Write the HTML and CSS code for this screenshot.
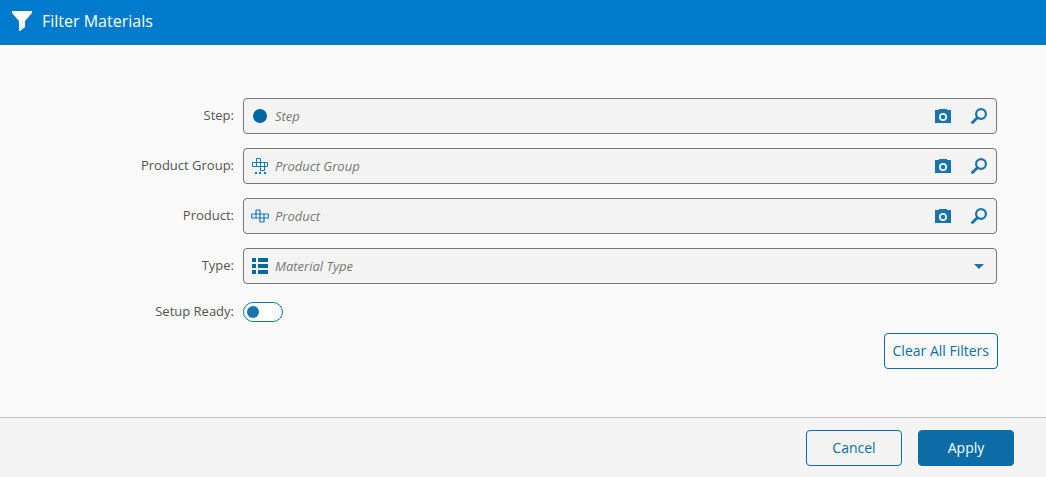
FILE: index.html
```
<!DOCTYPE html>
<html lang="en">
<head>
    <meta charset="UTF-8">
    <meta name="viewport" content="width=device-width, initial-scale=1.0">
    <title>Filter Materials</title>
    <link rel="stylesheet" href="styles.css">
</head>
<body>
    <svg class="sprite" aria-hidden="true">
        <symbol id="icon-camera" viewBox="0 0 16 14">
            <path fill-rule="evenodd" d="M0 1H4V0H12V1H16V14H0ZM8 4a4 4 0 1 0 0 8a4 4 0 1 0 0-8ZM8 5.700a2.300 2.300 0 1 1 0 4.600a2.300 2.300 0 1 1 0-4.600Z" fill="currentColor"/>
        </symbol>
        <symbol id="icon-search" viewBox="0 0 16 16">
            <circle cx="10" cy="6" r="4.900" fill="none" stroke="currentColor" stroke-width="2.200"/>
            <path d="M6.300 9.700L1.500 14.500" fill="none" stroke="currentColor" stroke-width="2.800" stroke-linecap="round"/>
        </symbol>
    </svg>
    <header class="dialog-header">
        <svg class="header-icon" viewBox="0 0 20 20" aria-hidden="true">
            <path d="M0 0H20V2L13 10V16L8 20H7V10L0 2Z" fill="currentColor"/>
        </svg>
        <h1 class="dialog-title">Filter Materials</h1>
    </header>
    <form class="dialog-form">
        <main class="dialog-body">
            <div class="form-row">
                <label class="form-label" for="step">Step:</label>
                <div class="field">
                    <svg class="field-icon" viewBox="0 0 18 18" aria-hidden="true"><circle cx="9" cy="9" r="7" fill="currentColor"/></svg>
                    <input class="field-input" id="step" type="text" placeholder="Step">
                    <button class="icon-btn" type="button" aria-label="Scan step"><svg class="camera" aria-hidden="true"><use href="#icon-camera"/></svg></button>
                    <button class="icon-btn" type="button" aria-label="Search step"><svg class="search" aria-hidden="true"><use href="#icon-search"/></svg></button>
                </div>
            </div>
            <div class="form-row">
                <label class="form-label" for="product-group">Product Group:</label>
                <div class="field">
                    <svg class="field-icon outline" viewBox="0 0 18 18" aria-hidden="true">
                        <path d="M1.500 5.500H16.500V9.500H1.500ZM5.500 9.500V1.500H9.500V13.500H13.500V5.500M9.500 9.500H13.500" fill="none" stroke="currentColor"/>
                        <path d="M4 15H6V17H4ZM8 15H10V17H8ZM13 15H15V17H13Z" fill="currentColor"/>
                    </svg>
                    <input class="field-input" id="product-group" type="text" placeholder="Product Group">
                    <button class="icon-btn" type="button" aria-label="Scan product group"><svg class="camera" aria-hidden="true"><use href="#icon-camera"/></svg></button>
                    <button class="icon-btn" type="button" aria-label="Search product group"><svg class="search" aria-hidden="true"><use href="#icon-search"/></svg></button>
                </div>
            </div>
            <div class="form-row">
                <label class="form-label" for="product">Product:</label>
                <div class="field">
                    <svg class="field-icon outline" viewBox="0 0 18 18" aria-hidden="true">
                        <path d="M.7 7H17.300V11H.7ZM5 11V3H9V15H13V7M9 11H13" fill="none" stroke="currentColor" stroke-width="1.200" stroke-linejoin="round"/>
                    </svg>
                    <input class="field-input" id="product" type="text" placeholder="Product">
                    <button class="icon-btn" type="button" aria-label="Scan product"><svg class="camera" aria-hidden="true"><use href="#icon-camera"/></svg></button>
                    <button class="icon-btn" type="button" aria-label="Search product"><svg class="search" aria-hidden="true"><use href="#icon-search"/></svg></button>
                </div>
            </div>
            <div class="form-row">
                <label class="form-label" for="type">Type:</label>
                <div class="field">
                    <svg class="field-icon" viewBox="0 0 18 18" aria-hidden="true">
                        <path d="M1 1H5V5H1ZM7 1H17V5H7ZM1 7H5V11H1ZM7 7H17V11H7ZM1 13H5V17H1ZM7 13H17V17H7Z" fill="currentColor"/>
                    </svg>
                    <select class="field-input" id="type">
                        <option value="">Material Type</option>
                    </select>
                    <svg class="caret" viewBox="0 0 10 5" aria-hidden="true"><path d="M0 0H10L5 5Z" fill="currentColor"/></svg>
                </div>
            </div>
            <div class="form-row toggle-row">
                <label class="form-label" for="setup-ready">Setup Ready:</label>
                <input class="toggle" id="setup-ready" type="checkbox" role="switch">
            </div>
            <div class="form-actions">
                <button class="btn btn-clear" type="reset">Clear All Filters</button>
            </div>
        </main>
        <footer class="dialog-footer">
            <button class="btn" type="button">Cancel</button>
            <button class="btn btn-primary" type="submit">Apply</button>
        </footer>
    </form>
</body>
</html>
```
FILE: styles.css
```
:root {
    --header-bg: #007acc;
    --primary: #0c6da6;
    --icon-color: #1874ad;
    --field-icon: #0067a3;
    --field-icon-outline: #1679b8;
    --border: #777;
    --font-family: "Open Sans", "Noto Sans", sans-serif;
}
* {
    box-sizing: border-box;
}
body {
    display: flex;
    flex-direction: column;
    min-height: 100vh;
    margin: 0;
    background-color: #fafafa;
    color: #555;
    font-family: var(--font-family);
    font-size: 13px;
}
.sprite {
    display: none;
}
.dialog-header {
    display: flex;
    align-items: center;
    gap: 10px;
    padding: 10px 12px 13px;
    background-color: var(--header-bg);
    color: #fff;
}
.header-icon {
    width: 20px;
    height: 20px;
}
.dialog-title {
    margin: 0;
    font-size: 16px;
    font-weight: 400;
    line-height: 22px;
}
.dialog-form {
    display: flex;
    flex: 1;
    flex-direction: column;
}
.dialog-body {
    display: flex;
    flex: 1;
    flex-direction: column;
    gap: 14px;
    padding: 53px 48px 24px;
}
.form-row {
    display: grid;
    grid-template-columns: 186px 1fr;
    align-items: center;
    gap: 9px;
    padding-right: 1px;
}
.form-label {
    padding-bottom: 2px;
    line-height: 18px;
    text-align: right;
}
.field {
    display: flex;
    align-items: center;
    height: 36px;
    padding: 0 7px;
    border: 1px solid var(--border);
    border-radius: 4px;
    background-color: #f4f4f4;
}
.field:focus-within {
    border-color: var(--primary);
}
.field-icon {
    flex: none;
    width: 18px;
    height: 18px;
    color: var(--field-icon);
}
.field-icon.outline {
    color: var(--field-icon-outline);
}
.field-input {
    flex: 1;
    min-width: 0;
    height: 34px;
    padding: 0 6px;
    border: none;
    outline: none;
    background: none;
    color: #777;
    font-family: inherit;
    font-size: 13px;
    font-style: italic;
    appearance: none;
}
.field-input::placeholder {
    color: #777;
}
.icon-btn {
    display: flex;
    justify-content: center;
    align-items: center;
    width: 20px;
    height: 34px;
    margin-left: 16px;
    padding: 0;
    border: none;
    background: none;
    color: var(--icon-color);
    cursor: pointer;
}
.camera {
    width: 16px;
    height: 14px;
}
.search {
    width: 16px;
    height: 16px;
}
.caret {
    width: 10px;
    height: 5px;
    margin-right: 5px;
    color: var(--icon-color);
}
.toggle-row {
    padding-top: 4px;
}
.toggle {
    width: 40px;
    height: 20px;
    margin: 0;
    padding: 3px;
    border: 1px solid var(--icon-color);
    border-radius: 10px;
    background-color: #fff;
    appearance: none;
    cursor: pointer;
}
.toggle::before {
    content: "";
    display: block;
    width: 12px;
    height: 12px;
    border-radius: 50%;
    background-color: var(--icon-color);
}
.toggle:checked::before {
    margin-left: auto;
}
.form-actions {
    display: flex;
    justify-content: flex-end;
    margin-top: -3px;
}
.btn {
    min-width: 96px;
    height: 36px;
    padding: 0 8px 2px;
    border: 1px solid var(--primary);
    border-radius: 4px;
    background: none;
    color: var(--primary);
    font-family: inherit;
    font-size: 14px;
    cursor: pointer;
}
.btn-primary {
    background-color: var(--primary);
    color: #fff;
}
.dialog-footer {
    display: flex;
    justify-content: flex-end;
    gap: 16px;
    padding: 12px 32px 11px;
    border-top: 1px solid #c4c4c4;
    background-color: #f4f4f4;
}
```
